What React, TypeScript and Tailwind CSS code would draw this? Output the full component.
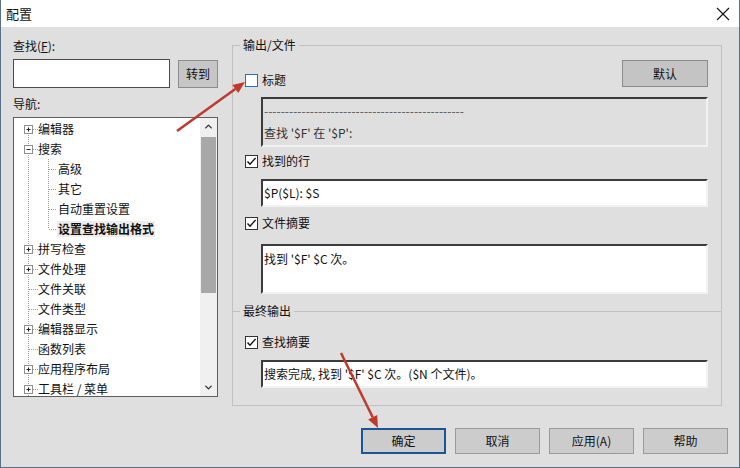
import React from 'react';
import { ChevronUp, ChevronDown } from 'lucide-react';

type Kind = 'plus' | 'minus' | 'child' | 'childLast' | 'leaf';

interface TreeNode {
  label: string;
  kind: Kind;
  selected?: boolean;
}

const nodes: TreeNode[] = [
  { label: '编辑器', kind: 'plus' },
  { label: '搜索', kind: 'minus' },
  { label: '高级', kind: 'child' },
  { label: '其它', kind: 'child' },
  { label: '自动重置设置', kind: 'child' },
  { label: '设置查找输出格式', kind: 'childLast', selected: true },
  { label: '拼写检查', kind: 'plus' },
  { label: '文件处理', kind: 'plus' },
  { label: '文件关联', kind: 'leaf' },
  { label: '文件类型', kind: 'leaf' },
  { label: '编辑器显示', kind: 'plus' },
  { label: '函数列表', kind: 'leaf' },
  { label: '应用程序布局', kind: 'plus' },
  { label: '工具栏 / 菜单', kind: 'plus' },
];

const dots = '#9c9c9c';

const RootCell = ({ kind, first }: { kind: Kind; first: boolean }) => {
  const isChild = kind === 'child' || kind === 'childLast';
  const expander = kind === 'plus' || kind === 'minus';
  return (
    <svg width="20" height="20" className="shrink-0">
      <line x1="10.5" y1={first ? 10 : 0} x2="10.5" y2="20" stroke={dots} strokeDasharray="1 1" />
      {!isChild && <line x1="11" y1="10.5" x2="20" y2="10.5" stroke={dots} strokeDasharray="1 1" />}
      {expander && (
        <>
          <rect x="6.5" y="6.5" width="8" height="8" fill="#ffffff" stroke="#8e8e8e" />
          <line x1="8.5" y1="10.5" x2="12.5" y2="10.5" stroke="#222222" />
          {kind === 'plus' && <line x1="10.5" y1="8.5" x2="10.5" y2="12.5" stroke="#222222" />}
        </>
      )}
    </svg>
  );
};

const ChildCell = ({ last }: { last: boolean }) => (
  <svg width="20" height="20" className="shrink-0">
    <line x1="10.5" y1="0" x2="10.5" y2={last ? 10 : 20} stroke={dots} strokeDasharray="1 1" />
    <line x1="11" y1="10.5" x2="19" y2="10.5" stroke={dots} strokeDasharray="1 1" />
  </svg>
);

const Check = ({ checked, focus, label }: { checked?: boolean; focus?: boolean; label: string }) => (
  <div className="flex items-center gap-[4px] h-[16px] leading-[16px]">
    <span
      className={`w-[13px] h-[13px] border bg-white flex items-center justify-center ${
        focus ? 'border-[#2a6fb3]' : 'border-[#333333]'
      }`}
    >
      {checked && (
        <svg width="11" height="11" viewBox="0 0 11 11">
          <path d="M1.5 5.5 L4 8.2 L9.6 2" fill="none" stroke="#111111" strokeWidth="1.4" />
        </svg>
      )}
    </span>
    <span>{label}</span>
  </div>
);

const Btn = ({ label, primary }: { label: string; primary?: boolean }) => (
  <div
    className={`w-[85px] h-[26px] flex items-center justify-center bg-[#cccccc] ${
      primary ? 'border-2 border-[#1b5596]' : 'border border-[#9a9a9a]'
    }`}
  >
    {label}
  </div>
);

const sunken =
  'border-2 border-t-[#3c3c3c] border-l-[#3c3c3c] border-r-[#f2f2f2] border-b-[#f2f2f2]';

export default function App() {
  return (
    <div className="relative w-[740px] h-[468px] overflow-hidden flex flex-col border-x border-b border-[#58708a] text-[12px] text-[#111111] font-['Noto_Sans_CJK_SC',sans-serif]">
      {/* title bar */}
      <div className="h-[27px] shrink-0 bg-white flex items-center justify-between pl-[5px] pr-[9px]">
        <span className="text-[13px]">配置</span>
        <svg width="14" height="14" viewBox="0 0 14 14">
          <path d="M1 1 L13 13 M13 1 L1 13" stroke="#111111" strokeWidth="1.1" />
        </svg>
      </div>

      <div className="flex-1 bg-[#dfdfdf] flex flex-col pt-[10px]">
        <div className="flex items-start">
          {/* left: search + navigation */}
          <div className="ml-[12px] w-[205px] flex flex-col">
            <div className="mt-[1px] leading-[16px]">
              查找(<span className="underline">F</span>):
            </div>
            <div className="mt-[5px] flex items-start">
              <div className="w-[157px] h-[29px] bg-white border border-[#4a4a4a]" />
              <div className="ml-[8px] mt-[1px] w-[40px] h-[28px] bg-[#c6c6c6] border border-[#8c8c8c] flex items-center justify-center">
                转到
              </div>
            </div>
            <div className="mt-[8px] leading-[16px]">导航:</div>
            <div className="mt-[5px] h-[280px] bg-white border border-[#5e5e5e] flex">
              <div className="flex-1 overflow-hidden pt-[1px] pl-[4px]">
                {nodes.map((n, i) => {
                  const isChild = n.kind === 'child' || n.kind === 'childLast';
                  return (
                    <div key={n.label} className="h-[20px] flex items-center whitespace-nowrap">
                      <RootCell kind={n.kind} first={i === 0} />
                      {isChild && <ChildCell last={n.kind === 'childLast'} />}
                      <span
                        className={
                          n.selected
                            ? 'font-bold bg-[#ededed] -ml-[1px] px-[1px] leading-[16px]'
                            : 'leading-[16px]'
                        }
                      >
                        {n.label}
                      </span>
                    </div>
                  );
                })}
              </div>
              {/* scrollbar */}
              <div className="w-[17px] bg-[#f0f0f0] flex flex-col">
                <div className="h-[17px] flex items-center justify-center">
                  <ChevronUp size={11} strokeWidth={3} color="#333333" />
                </div>
                <div className="flex-1 pt-[2px]">
                  <div className="mx-[1px] h-[156px] bg-[#a8a8a8]" />
                </div>
                <div className="h-[17px] flex items-center justify-center">
                  <ChevronDown size={11} strokeWidth={3} color="#333333" />
                </div>
              </div>
            </div>
          </div>

          {/* right: output format */}
          <div className="ml-[14px] w-[490px] flex flex-col">
            <fieldset className="border border-b-0 border-[#c0c0c0] pl-[12px] pr-[13px] pb-[17px]">
              <legend className="-ml-[5px] px-[3px] leading-[16px]">输出/文件</legend>
              <div className="mt-[7px] flex items-start justify-between">
                <div className="mt-[12px]">
                  <Check focus label="标题" />
                </div>
                <div className="w-[86px] h-[27px] bg-[#c4c4c4] border border-[#8a8a8a] flex items-center justify-center">
                  默认
                </div>
              </div>
              <div className={`ml-[16px] mt-[9px] h-[50px] bg-[#dfdfdf] pl-[1px] pt-[1px] leading-[22px] text-[#333333] ${sunken}`}>
                <div className="text-[#555555]">------------------------------------------------</div>
                <div>查找 '$F' 在 '$P':</div>
              </div>
              <div className="mt-[6px]">
                <Check checked label="找到的行" />
              </div>
              <div className={`ml-[16px] mt-[10px] h-[28px] bg-white flex items-center pl-[1px] ${sunken}`}>
                $P($L): $S
              </div>
              <div className="mt-[8px]">
                <Check checked label="文件摘要" />
              </div>
              <div className={`ml-[16px] mt-[13px] h-[50px] bg-white pl-[1px] pt-[2px] leading-[22px] ${sunken}`}>
                找到 '$F' $C 次。
              </div>
            </fieldset>
            <fieldset className="-mt-[8px] border border-[#c0c0c0] pl-[12px] pr-[13px] pb-[17px]">
              <legend className="-ml-[5px] px-[3px] leading-[16px]">最终输出</legend>
              <div className="mt-[15px]">
                <Check checked label="查找摘要" />
              </div>
              <div className={`ml-[16px] mt-[10px] h-[28px] bg-white flex items-center pl-[1px] ${sunken}`}>
                搜索完成, 找到 '$F' $C 次。($N 个文件)。
              </div>
            </fieldset>
          </div>
        </div>

        {/* dialog buttons */}
        <div className="mt-[22px] flex justify-end gap-[9px] pr-[11px]">
          <Btn primary label="确定" />
          <Btn label="取消" />
          <Btn label="应用(A)" />
          <Btn label="帮助" />
        </div>
      </div>

      {/* annotation arrows */}
      <svg className="absolute inset-0 pointer-events-none" width="740" height="468">
        <line x1="176" y1="131" x2="234.3" y2="89" stroke="#bd3a2d" strokeWidth="2.5" />
        <polygon points="244,82 237.2,93.1 231.4,84.9" fill="#bd3a2d" />
        <line x1="340" y1="353" x2="371.7" y2="417.2" stroke="#bd3a2d" strokeWidth="2.5" />
        <polygon points="377,428 376.2,415 367.2,419.4" fill="#bd3a2d" />
      </svg>
    </div>
  );
}
